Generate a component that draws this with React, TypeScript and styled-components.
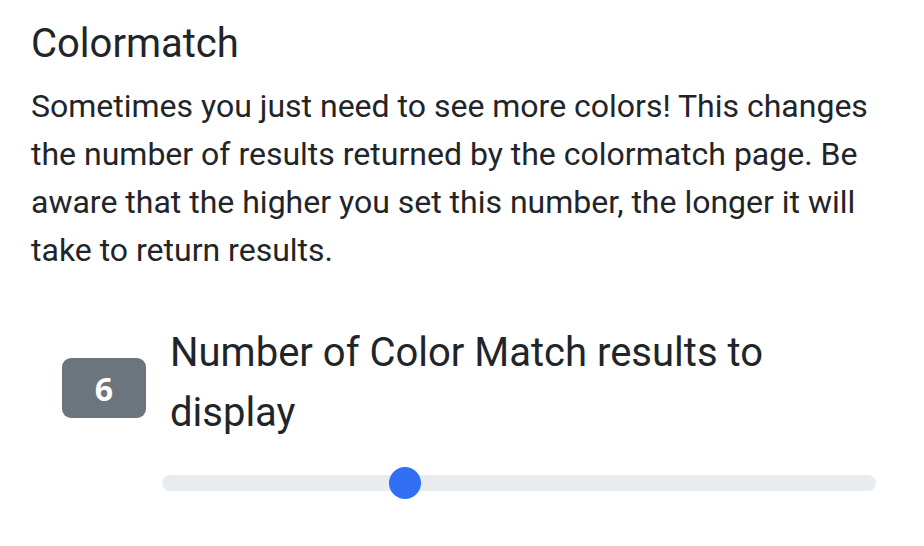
import { useState } from 'react';
import styled, { createGlobalStyle } from 'styled-components';

const GlobalStyle = createGlobalStyle`
  html, body {
    margin: 0;
    padding: 0;
    background: #ffffff;
  }
  body {
    font-family: Roboto, "Liberation Sans", sans-serif;
    color: #212529;
  }
`;

const Section = styled.section`
  width: 862px;
  padding: 20px 0 0 31px;
`;

const Title = styled.h5`
  margin: 0 0 14px;
  font-size: 40px;
  font-weight: 400;
  line-height: 1.2;
`;

const Text = styled.p`
  margin: 0 0 49px;
  font-size: 32px;
  line-height: 1.5;
`;

const SettingRow = styled.div`
  display: flex;
  align-items: flex-start;
  padding-left: 31px;
`;

const Badge = styled.span`
  display: flex;
  align-items: center;
  justify-content: center;
  flex: 0 0 auto;
  width: 84px;
  height: 60px;
  margin-top: 35px;
  border-radius: 9px;
  background: #6c757d;
  color: #ffffff;
  font-family: "Open Sans", "Liberation Sans", sans-serif;
  font-weight: 700;
  font-size: 32px;
`;

const Field = styled.div`
  display: flex;
  flex-direction: column;
  width: 714px;
  margin-left: 16px;
`;

const Label = styled.label`
  padding-left: 8px;
  font-size: 40px;
  line-height: 1.5;
`;

const Range = styled.input`
  appearance: none;
  -webkit-appearance: none;
  width: 714px;
  height: 32px;
  margin: 24px 0 0;
  padding: 0;
  background: transparent;

  &::-webkit-slider-runnable-track {
    height: 16px;
    border-radius: 8px;
    background: #e9ecef;
  }

  &::-webkit-slider-thumb {
    -webkit-appearance: none;
    appearance: none;
    width: 32px;
    height: 32px;
    margin-top: -8px;
    border: none;
    border-radius: 50%;
    background: #306ef3;
  }

  &:focus {
    outline: none;
  }
`;

export default function App() {
  const [count, setCount] = useState(6);

  return (
    <>
      <GlobalStyle />
      <Section>
        <Title>Colormatch</Title>
        <Text>
          Sometimes you just need to see more colors! This changes the number of results
          returned by the colormatch page. Be aware that the higher you set this number, the
          longer it will take to return results.
        </Text>
        <SettingRow>
          <Badge>{count}</Badge>
          <Field>
            <Label htmlFor="colormatch-count">Number of Color Match results to display</Label>
            <Range
              id="colormatch-count"
              type="range"
              min={1}
              max={16}
              value={count}
              onChange={(e) => setCount(Number(e.target.value))}
            />
          </Field>
        </SettingRow>
      </Section>
    </>
  );
}
